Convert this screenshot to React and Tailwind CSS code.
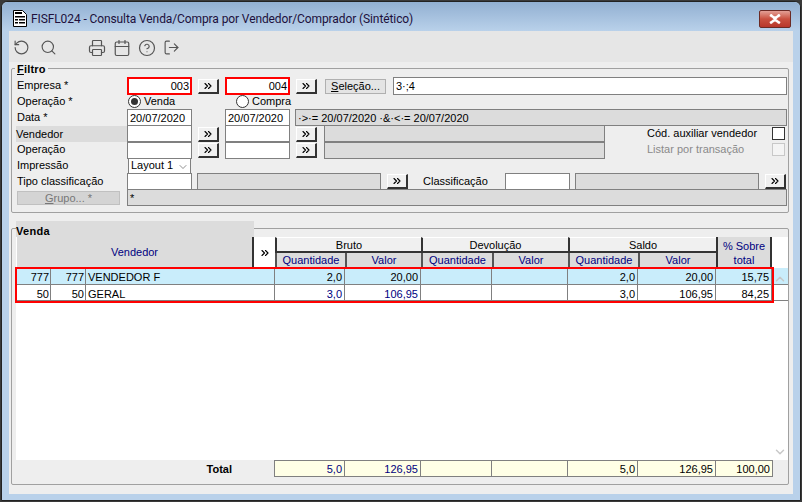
import { RotateCcw, Search, Printer, Calendar, CircleHelp, LogOut, ChevronUp, ChevronDown, ChevronsRight } from "lucide-react";

/* ----------------- Small controls ----------------- */

function Field({ w, ml = "", h = "h-[17px]", value = "", className = "border-[#808080] bg-white" }) {
  return (
    <div className={`${w} ${ml} ${h} shrink-0 border flex items-center px-[2px] pt-[1px] ${className}`}>
      {value}
    </div>
  );
}

function RedField({ w, ml = "", value }) {
  return (
    <div className={`${w} ${ml} h-[18px] shrink-0 border-2 border-[#ff0000] bg-white flex items-center justify-end pr-[1px]`}>
      {value}
    </div>
  );
}

function GrayBox({ w, ml = "", h = "h-[17px]", value = "" }) {
  return (
    <div className={`${w} ${ml} ${h} shrink-0 border border-[#808080] bg-[#dcdcdc] flex items-center px-[2px] pt-[1px]`}>
      {value}
    </div>
  );
}

function Arrow({ ml = "", mt = "mt-[2px]", w = "w-[21px]" }) {
  return (
    <button className={`${w} ${ml} ${mt} h-[15px] shrink-0 bg-[#f0f0f0] border-t border-l border-t-white border-l-white border-r-2 border-b-2 border-r-[#333] border-b-[#333] flex items-center justify-center`}>
      <ChevronsRight size={12} strokeWidth={2.2} className="text-black" />
    </button>
  );
}

function Row({ h, children }) {
  return <div className={`flex items-start ${h}`}>{children}</div>;
}

function Label({ children, w = "w-[115px]", leading = "leading-[15px]" }) {
  return <div className={`${w} ${leading} pl-[5px] shrink-0`}>{children}</div>;
}

function Radio({ checked, ml, w, children }) {
  return (
    <div className={`flex items-center shrink-0 ${ml} ${w}`}>
      <span className="w-[13px] h-[13px] rounded-full border border-[#333] bg-white flex items-center justify-center">
        {checked && <span className="w-[7px] h-[7px] rounded-full bg-[#333]" />}
      </span>
      <span className="ml-[3px] leading-[13px]">{children}</span>
    </div>
  );
}

/* ----------------- Grid data ----------------- */

const cols = ["w-[70px]", "w-[76px]", "w-[71px]", "w-[76px]", "w-[70px]", "w-[78px]", "w-[56px]"];

const rows = [
  { a: "777", b: "777", name: "VENDEDOR F", bg: "bg-[#c9edfb]", bruto: "text-black", vals: ["2,0", "20,00", "", "", "2,0", "20,00", "15,75"] },
  { a: "50", b: "50", name: "GERAL", bg: "bg-white", bruto: "text-[#000080]", vals: ["3,0", "106,95", "", "", "3,0", "106,95", "84,25"] },
];

const totals = ["5,0", "126,95", "", "", "5,0", "126,95", "100,00"];

function GroupHead({ title, w, subs }) {
  return (
    <div className={`${w} shrink-0 flex flex-col`}>
      <div className="h-[16px] bg-[#f0f0f0] border-t border-t-white border-b-2 border-b-[#333] border-l-2 border-l-[#333] flex items-center justify-center pt-[1px]">
        {title}
      </div>
      <div className="flex h-[14px]">
        {subs.map((s) => (
          <div
            key={s.w}
            className={`${s.w} bg-[#dcdcdc] border-l-2 border-l-[#555] flex items-center justify-center text-[#000080] pt-[1px]`}
          >
            {s.t}
          </div>
        ))}
      </div>
    </div>
  );
}

/* ----------------- Page ----------------- */

export default function App() {
  return (
    <div
      className="w-[802px] h-[502px] overflow-hidden bg-[#3a3a3a] text-[11px] text-black"
      style={{ fontFamily: '"Liberation Sans", Arial, sans-serif' }}
    >
      <div className="w-[800px] h-[500px] ml-[1px] mt-[1px] border border-[#222] rounded-t-[6px] bg-[#b9d1ea] flex flex-col px-[7px] pb-[6px] relative">
        {/* Title bar */}
        <div className="h-[29px] -mx-[7px] px-[11px] pt-[4px] shrink-0 flex items-center rounded-t-[6px] bg-gradient-to-b from-[#92b0d2] to-[#b9d1ea]">
          <svg width="14" height="17" viewBox="0 0 14 17" className="shrink-0">
            <path d="M0.5 0.5h9l4 4v12h-13z" fill="#fff" stroke="#000" />
            <path d="M2 2h7v2H2zM2 6h10v1.5H2zM2 9h3v1.5H2zM6 9h6v1.5H6zM2 12h3v1.5H2zM6 12h6v1.5H6z" fill="#000" />
          </svg>
          <div
            className="ml-[4px] text-[12px] text-[#20103c] tracking-[-0.1px]"
            style={{ fontFamily: 'Roboto, sans-serif' }}
          >
            FISFL024 - Consulta Venda/Compra por Vendedor/Comprador (Sintético)
          </div>
          <div className="ml-auto mr-[-2px] w-[32px] h-[18px] rounded-[2px] border border-[#6b2a24] bg-gradient-to-b from-[#e2a096] via-[#c9503f] to-[#b8362a] flex items-center justify-center">
            <svg width="14" height="10" viewBox="0 0 14 10">
              <path d="M2 1l5 3 5-3M2 9l5-3 5 3M3 1l8 8M11 1l-8 8" stroke="#fff" strokeWidth="2.4" fill="none" />
            </svg>
          </div>
        </div>

        {/* Toolbar */}
        <div className="h-[31px] shrink-0 bg-[#e6e6e6] flex items-center pl-[4px] pt-[2px] text-[#555]">
          <RotateCcw size={17} strokeWidth={1.6} />
          <Search size={17} strokeWidth={1.6} className="ml-[10px]" />
          <Printer size={18} strokeWidth={1.6} className="ml-[31px]" />
          <Calendar size={18} strokeWidth={1.6} className="ml-[7px]" />
          <CircleHelp size={18} strokeWidth={1.6} className="ml-[7px]" />
          <LogOut size={17} strokeWidth={1.6} className="ml-[7px]" />
        </div>

        {/* Body */}
        <div className="flex-1 bg-[#eeeeee] px-[2px] pt-[6px]">
          {/* Filtro */}
          <div className="w-[778px] h-[145px] border border-[#a0a0a0] rounded-[2px] pt-[8px]">
            <div className="absolute top-[60px] left-[13px] px-[2px] bg-[#eeeeee] font-bold text-[11px] tracking-[0.2px] leading-[14px]">
              <span className="underline">F</span>iltro
            </div>

            <Row h="h-[18px]">
              <Label leading="leading-[17px]">Empresa *</Label>
              <RedField w="w-[65px]" value="003" />
              <Arrow ml="ml-[6px]" />
              <RedField w="w-[65px]" ml="ml-[6px]" value="004" />
              <Arrow ml="ml-[6px]" />
              <button className="w-[61px] h-[15px] mt-[2px] ml-[8px] shrink-0 bg-[#e4e4e4] border border-[#b0b0b0] flex items-center justify-center">
                <span className="underline">S</span>eleção...
              </button>
              <Field w="w-[394px]" ml="ml-[7px]" h="h-[18px]" value="3·;4" />
            </Row>

            <Row h="h-[14px]">
              <Label leading="leading-[13px]">Operação *</Label>
              <Radio checked ml="ml-[1px]" w="w-[108px]">Venda</Radio>
              <Radio ml="" w="w-[100px]">Compra</Radio>
            </Row>

            <Row h="h-[16px]">
              <Label leading="leading-[17px]">Data *</Label>
              <Field w="w-[65px]" value="20/07/2020" />
              <Field w="w-[65px]" ml="ml-[33px]" value="20/07/2020" />
              <GrayBox w="w-[492px]" ml="ml-[5px]" value="·>·= 20/07/2020 ·&·<·= 20/07/2020" />
            </Row>

            <Row h="h-[17px]">
              <div className="ml-[4px] w-[111px] h-[16px] mt-[1px] shrink-0 bg-[#dcdcdc] leading-[16px]">Vendedor</div>
              <Field w="w-[65px]" />
              <Arrow ml="ml-[6px]" />
              <Field w="w-[65px]" ml="ml-[6px]" />
              <Arrow ml="ml-[6px]" />
              <GrayBox w="w-[281px]" ml="ml-[7px]" />
              <div className="ml-[42px] w-[125px] shrink-0 leading-[17px]">Cód. auxiliar vendedor</div>
              <div className="w-[13px] h-[13px] mt-[2px] shrink-0 border border-[#333] bg-white" />
            </Row>

            <Row h="h-[16px]">
              <Label>Operação</Label>
              <Field w="w-[65px]" />
              <Arrow ml="ml-[6px]" mt="mt-[1px]" />
              <Field w="w-[65px]" ml="ml-[6px]" />
              <Arrow ml="ml-[6px]" mt="mt-[1px]" />
              <GrayBox w="w-[281px]" ml="ml-[7px]" />
              <div className="ml-[42px] w-[125px] shrink-0 leading-[15px] text-[#8a8a8a]">Listar por transação</div>
              <div className="w-[13px] h-[13px] mt-[1px] shrink-0 border border-[#c8c8c8] bg-[#f4f4f4]" />
            </Row>

            <Row h="h-[15px]">
              <Label>Impressão</Label>
              <div className="ml-[1px] w-[63px] h-[16px] shrink-0 border border-[#808080] bg-white flex items-center pl-[2px] pb-[2px] relative z-10">
                Layout 1
                <ChevronDown size={12} strokeWidth={1.2} className="ml-auto mr-[1px] mt-[3px] text-[#444]" />
              </div>
            </Row>

            <Row h="h-[16px]">
              <Label leading="leading-[17px]">Tipo classificação</Label>
              <Field w="w-[65px]" />
              <GrayBox w="w-[184px]" ml="ml-[5px]" />
              <Arrow ml="ml-[6px]" mt="mt-[1px]" />
              <div className="ml-[15px] w-[82px] shrink-0 leading-[17px]">Classificação</div>
              <Field w="w-[65px]" />
              <GrayBox w="w-[184px]" ml="ml-[5px]" />
              <Arrow ml="ml-[6px]" mt="mt-[1px]" />
            </Row>

            <Row h="h-[17px]">
              <button className="ml-[5px] w-[103px] h-[14px] mt-[2px] shrink-0 bg-[#d4d4d4] border border-[#c0c0c0] text-[#777] flex items-center justify-center">
                <span className="underline">G</span>rupo... *
              </button>
              <GrayBox w="w-[660px]" ml="ml-[7px]" value="*" />
            </Row>
          </div>

          {/* Venda */}
          <div className="w-[778px] h-[257px] mt-[15px] border border-[#a0a0a0] rounded-[2px] pl-[4px]">
            <div className="w-[238px] h-[16px] -mt-[8px] bg-[#dcdcdc] font-bold text-[11px] tracking-[0.3px] leading-[20px]">Venda</div>

            <div className="w-[772px] h-[223px] bg-white pl-[1px] relative">
              {/* Header */}
              <div className="flex h-[30px]">
                <div className="w-[237px] shrink-0 bg-[#dcdcdc] border-r-2 border-r-[#333] flex items-center justify-center text-[#000080] pt-[1px]">
                  Vendedor
                </div>
                <div className="w-[21px] shrink-0 flex items-center justify-center pt-[2px]">
                  <ChevronsRight size={12} strokeWidth={2.2} className="text-black" />
                </div>
                <GroupHead title="Bruto" w="w-[146px]" subs={[{ w: "w-[70px]", t: "Quantidade" }, { w: "w-[76px]", t: "Valor" }]} />
                <GroupHead title="Devolução" w="w-[147px]" subs={[{ w: "w-[71px]", t: "Quantidade" }, { w: "w-[76px]", t: "Valor" }]} />
                <GroupHead title="Saldo" w="w-[148px]" subs={[{ w: "w-[70px]", t: "Quantidade" }, { w: "w-[78px]", t: "Valor" }]} />
                <div className="w-[56px] shrink-0 bg-[#dcdcdc] border-l-2 border-l-[#333] border-r-2 border-r-[#333] text-center text-[#000080] leading-[14px] pt-[2px]">
                  % Sobre<br />total
                </div>
              </div>

              {/* Rows */}
              <div className="mt-[1px]">
                {rows.map((r) => (
                  <div key={r.name} className={`flex h-[16.5px] leading-[18px] border-b border-[#808080] ${r.bg}`}>
                    <div className="w-[34px] shrink-0 text-right pr-[1px] border-r border-[#808080]">{r.a}</div>
                    <div className="w-[35px] shrink-0 text-right pr-[1px] border-r border-[#808080]">{r.b}</div>
                    <div className="w-[189px] shrink-0 pl-[2px] border-r border-[#808080]">{r.name}</div>
                    {r.vals.map((v, i) => (
                      <div
                        key={i}
                        className={`${cols[i]} shrink-0 text-right pr-[2px] border-r border-[#808080] ${i < 2 ? r.bruto : ""}`}
                      >
                        {v}
                      </div>
                    ))}
                  </div>
                ))}
              </div>

              {/* Red highlight on the rows */}
              <div className="absolute left-[-1px] top-[30px] w-[759px] h-[36px] border-2 border-[#ff0000] pointer-events-none" />

              <ChevronUp size={14} strokeWidth={2.5} className="absolute left-[757px] top-[35px] text-[#c8c8c8]" />
              <ChevronDown size={14} strokeWidth={2.5} className="absolute left-[757px] top-[208px] text-[#c8c8c8]" />
            </div>

            {/* Total */}
            <div className="flex h-[17px]">
              <div className="w-[216px] shrink-0 text-right font-bold leading-[18px]">Total</div>
              <div className="w-[42px] shrink-0" />
              <div className="flex border border-[#808080] bg-[#ffffe6]">
                {totals.map((v, i) => (
                  <div
                    key={i}
                    className={`${cols[i]} shrink-0 text-right pr-[2px] leading-[16px] ${i < 6 ? "border-r border-[#808080]" : ""} ${i < 2 ? "text-[#000080]" : ""}`}
                  >
                    {v}
                  </div>
                ))}
              </div>
            </div>
          </div>
        </div>
      </div>
    </div>
  );
}
